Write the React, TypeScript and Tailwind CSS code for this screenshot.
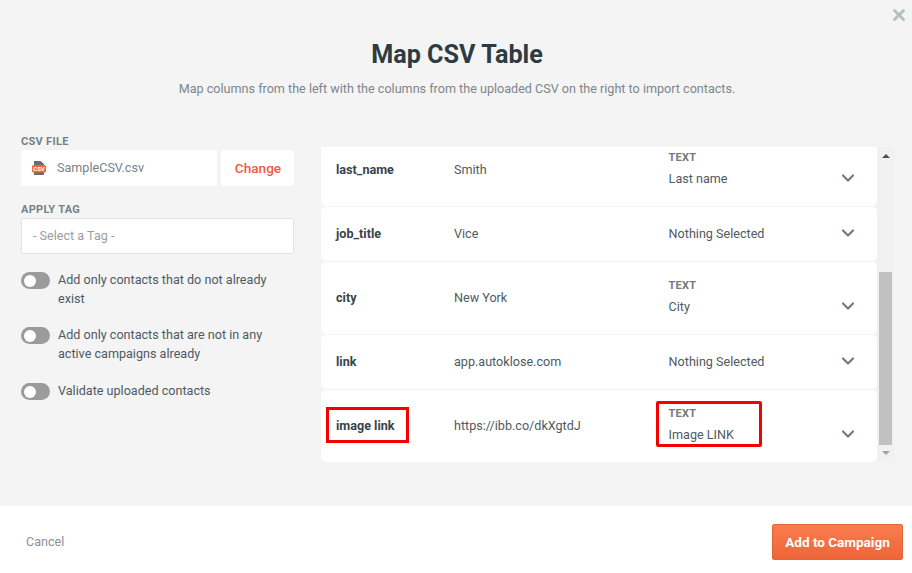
import React from 'react';
import { ChevronDown, X } from 'lucide-react';

const font = { fontFamily: 'Roboto, sans-serif' };

type Row = {
  name: string;
  sample: string;
  value: string;
  typed: boolean;
  marked?: boolean;
};

const rows: Row[] = [
  { name: 'last_name', sample: 'Smith', value: 'Last name', typed: true },
  { name: 'job_title', sample: 'Vice', value: 'Nothing Selected', typed: false },
  { name: 'city', sample: 'New York', value: 'City', typed: true },
  { name: 'link', sample: 'app.autoklose.com', value: 'Nothing Selected', typed: false },
  { name: 'image link', sample: 'https://ibb.co/dkXgtdJ', value: 'Image LINK', typed: true, marked: true },
];

function Toggle({ label, className }: { label: React.ReactNode; className?: string }) {
  return (
    <div className={`flex items-start gap-[8px] ${className ?? ''}`}>
      <div className="mt-[2px] flex h-[17px] w-[29px] shrink-0 items-center rounded-full bg-[#9b9b9b] pl-[3px]">
        <div className="h-[12px] w-[12px] rounded-full bg-white" />
      </div>
      <p className="text-[12.6px] leading-[19px] text-[#4e5a63]">{label}</p>
    </div>
  );
}

function CsvIcon() {
  return (
    <svg width="16" height="16" viewBox="0 0 16 16" className="shrink-0">
      <path d="M3 1h6.5l3.5 3v11H3z" fill="#6b6b6b" />
      <rect x="1" y="5" width="14" height="7.5" rx="1.5" fill="#ee6a3c" />
      <text x="8" y="10.8" textAnchor="middle" fontSize="6" fontWeight="700" fill="#fff" fontFamily="Roboto, sans-serif">
        CSV
      </text>
    </svg>
  );
}

function MapRow({ row }: { row: Row }) {
  return (
    <div
      className={`flex items-center rounded-[5px] bg-white pl-[15px] pr-[19px] ${row.typed ? 'h-[72px]' : 'h-[54px]'}`}
    >
      <div className="relative w-[118px] text-[12.6px] font-bold text-[#37444d]">
        {row.name}
        {row.marked && (
          <div className="absolute left-[-10px] top-[-10px] h-[36px] w-[83px] border-[3px] border-[#f40000]" />
        )}
      </div>
      <div className="w-[214.6px] text-[12.6px] text-[#4e5a63]">{row.sample}</div>
      <div className="relative flex-1">
        {row.typed ? (
          <div className="pb-[4px] pt-[1px]">
            <div className="text-[11px] font-bold leading-[13px] tracking-[0.2px] text-[#75797c]">TEXT</div>
            <div className="mt-[7px] text-[12.6px] leading-[16px] text-[#4e5a63]">{row.value}</div>
          </div>
        ) : (
          <div className="text-[12.6px] text-[#4e5a63]">{row.value}</div>
        )}
        {row.marked && (
          <div className="absolute left-[-13px] top-[-5px] h-[46px] w-[106px] rounded-[2px] border-[3px] border-[#f40000]" />
        )}
      </div>
      <ChevronDown
        size={20}
        strokeWidth={2.6}
        className={`shrink-0 text-[#6d7a82] ${row.typed ? 'mt-[16px]' : 'mt-[-2px]'}`}
      />
    </div>
  );
}

export default function App() {
  return (
    <div style={font} className="flex h-[573px] w-[912px] flex-col overflow-hidden bg-white">
      <div className="relative h-[506px] bg-[#f4f4f4]">
        <button type="button" className="absolute right-[4px] top-[6px] text-[#b3bfc3]">
          <X size={18} strokeWidth={3.8} />
        </button>

        <div className="pl-[2px] pt-[38px] text-center">
          <h1 className="text-[25.2px] font-bold leading-[34px] text-[#2e3b42]">Map CSV Table</h1>
          <p className="mt-[8px] text-[12.6px] leading-[18px] text-[#7d868c]">
            Map columns from the left with the columns from the uploaded CSV on the right to import contacts.
          </p>
        </div>

        <div className="mt-[27px] flex pl-[21px]">
          <div className="w-[273px] pt-[10px]">
            <div className="text-[11px] font-bold leading-[13px] tracking-[0.3px] text-[#75828a]">CSV FILE</div>
            <div className="mt-[2px] flex gap-[4px]">
              <div className="flex h-[36px] w-[196px] items-center gap-[10px] rounded-[3px] bg-white pl-[10px] text-[12.6px] text-[#7a8389]">
                <CsvIcon />
                SampleCSV.csv
              </div>
              <button
                type="button"
                className="h-[36px] flex-1 rounded-[3px] bg-white pl-[1px] text-[13.6px] font-medium text-[#f2583e]"
              >
                Change
              </button>
            </div>

            <div className="mt-[17px] text-[11px] font-bold leading-[13px] tracking-[0.3px] text-[#75828a]">APPLY TAG</div>
            <div className="mt-[2px] flex h-[36px] items-center rounded-[2px] border border-[#e4e4e4] bg-white pl-[11px] pt-[1px] text-[12.6px] text-[#9a9ea1]">
              - Select a Tag -
            </div>

            <div className="mt-[16px] flex flex-col gap-[17px]">
              <Toggle label="Add only contacts that do not already exist" />
              <Toggle label="Add only contacts that are not in any active campaigns already" />
              <Toggle className="mt-[1px]" label="Validate uploaded contacts" />
            </div>
          </div>

          <div className="ml-[27px] mt-[22px] flex h-[315px] w-[573px]">
            <div className="h-full w-[556px] overflow-hidden">
              <div className="mt-[-13px] flex flex-col gap-[1px]">
                {rows.map((row) => (
                  <MapRow key={row.name} row={row} />
                ))}
              </div>
            </div>
            <div className="flex h-full w-[17px] flex-col items-center bg-[#f1f1f1] px-[2px]">
              <div className="flex h-[16px] items-center justify-center pt-[2px]">
                <div className="h-0 w-0 border-x-[4px] border-b-[4px] border-x-transparent border-b-[#505050]" />
              </div>
              <div className="mt-[109px] h-[173px] w-full bg-[#c1c1c1]" />
              <div className="flex h-[16px] items-center justify-center">
                <div className="h-0 w-0 border-x-[4px] border-t-[4px] border-x-transparent border-t-[#a3a3a3]" />
              </div>
            </div>
          </div>
        </div>
      </div>

      <div className="flex flex-1 items-center justify-between pl-[26px] pr-[9px] pt-[5px]">
        <span className="text-[12.6px] text-[#8a9298]">Cancel</span>
        <button
          type="button"
          className="h-[36px] w-[131px] rounded-[2px] border border-[#e0663a] bg-gradient-to-b from-[#fb7c4e] to-[#ee6538] text-[13.5px] font-bold text-white"
        >
          Add to Campaign
        </button>
      </div>
    </div>
  );
}
